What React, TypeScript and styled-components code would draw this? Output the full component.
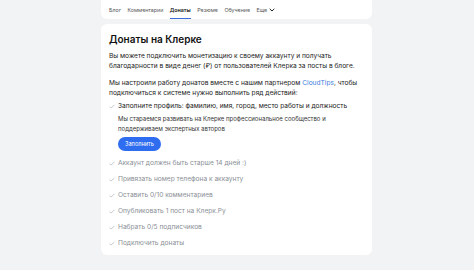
import React from "react";
import styled, { createGlobalStyle } from "styled-components";

const GlobalStyle = createGlobalStyle`
  html, body {
    margin: 0;
    padding: 0;
    background: #f2f3f5;
    font-family: Inter, "Noto Sans", sans-serif;
    color: #222;
  }
`;

const tabs = ["Блог", "Комментарии", "Донаты", "Резюме", "Обучение"];

const steps = [
  "Аккаунт должен быть старше 14 дней :)",
  "Привязать номер телефона к аккаунту",
  "Оставить 0/10 комментариев",
  "Опубликовать 1 пост на Клерк.Ру",
  "Набрать 0/5 подписчиков",
  "Подключить донаты",
];

const Check = ({ color }: { color: string }) => (
  <svg width="6" height="5" viewBox="0 0 6 5">
    <path d="M0.6 2.7 L2.2 4.1 L5.4 0.8" fill="none" stroke={color} strokeWidth="0.8" />
  </svg>
);

const App = () => {
  return (
    <>
      <GlobalStyle />
      <Page>
        <TabBar>
          {tabs.map((t) => (
            <Tab key={t} $active={t === "Донаты"}>
              {t}
            </Tab>
          ))}
          <Tab $active={false}>
            Еще
            <svg width="6" height="4" viewBox="0 0 6 4">
              <path d="M0.7 0.8 L3 3 L5.3 0.8" fill="none" stroke="#222" strokeWidth="1" />
            </svg>
          </Tab>
        </TabBar>

        <Card>
          <Title>Донаты на Клерке</Title>
          <Para>
            Вы можете подключить монетизацию к своему аккаунту и получать
            благодарности в виде денег (₽) от пользователей Клерка за посты в блоге.
          </Para>
          <Para>
            Мы настроили работу донатов вместе с нашим партнером{" "}
            <Link>CloudTips</Link>, чтобы подключиться к системе нужно выполнить
            ряд действий:
          </Para>

          <Steps>
            <Step $muted={false}>
              <Check color="#b8bcc2" />
              Заполните профиль: фамилию, имя, город, место работы и должность
            </Step>
            <StepBody>
              <Hint>
                Мы стараемся развивать на Клерке профессиональное сообщество и
                поддерживаем экспертных авторов
              </Hint>
              <Button>Заполнить</Button>
            </StepBody>
            {steps.map((s) => (
              <Step key={s} $muted>
                <Check color="#b8bcc2" />
                {s}
              </Step>
            ))}
          </Steps>
        </Card>
      </Page>
    </>
  );
};

const Page = styled.div`
  width: 271px;
  margin-left: 101px;
  display: flex;
  flex-direction: column;
  gap: 5px;
`;

const TabBar = styled.div`
  background: #fff;
  height: 19px;
  border-radius: 0 0 6px 6px;
  display: flex;
  align-items: stretch;
  gap: 6.5px;
  padding: 0 8px;
`;

const Tab = styled.div<{ $active: boolean }>`
  font-size: 5.3px;
  display: flex;
  align-items: center;
  gap: 2px;
  color: ${(p) => (p.$active ? "#111" : "#555")};
  font-weight: ${(p) => (p.$active ? 600 : 400)};
  border-bottom: 1.2px solid ${(p) => (p.$active ? "#3b6fd8" : "transparent")};
  padding-top: 1px;
`;

const Card = styled.div`
  background: #fff;
  border-radius: 6px;
  padding: 8px 8px 4px 8px;
  display: flex;
  flex-direction: column;
`;

const Title = styled.h2`
  margin: 0 0 5px;
  font-size: 10px;
  font-weight: 600;
  line-height: 14px;
  color: #111;
`;

const Para = styled.p`
  margin: 0 0 7px;
  font-size: 6.6px;
  line-height: 10px;
  color: #222;

  &:last-of-type {
    margin-bottom: 0;
  }
`;

const Link = styled.span`
  color: #3b7be0;
`;

const Steps = styled.div`
  display: flex;
  flex-direction: column;
`;

const Step = styled.div<{ $muted: boolean }>`
  display: flex;
  align-items: center;
  gap: 3px;
  height: 16px;
  font-size: 6.6px;
  color: ${(p) => (p.$muted ? "#8a8f96" : "#222")};
`;

const StepBody = styled.div`
  padding-left: 9px;
  display: flex;
  flex-direction: column;
  align-items: flex-start;
  margin-bottom: 4px;
`;

const Hint = styled.p`
  margin: 0 0 3px;
  font-size: 6px;
  line-height: 10px;
  color: #333;
`;

const Button = styled.button`
  background: #2f6df0;
  color: #fff;
  border: none;
  border-radius: 7px;
  height: 14px;
  padding: 0 7px;
  font-family: inherit;
  font-size: 5.6px;
`;

export default App;
